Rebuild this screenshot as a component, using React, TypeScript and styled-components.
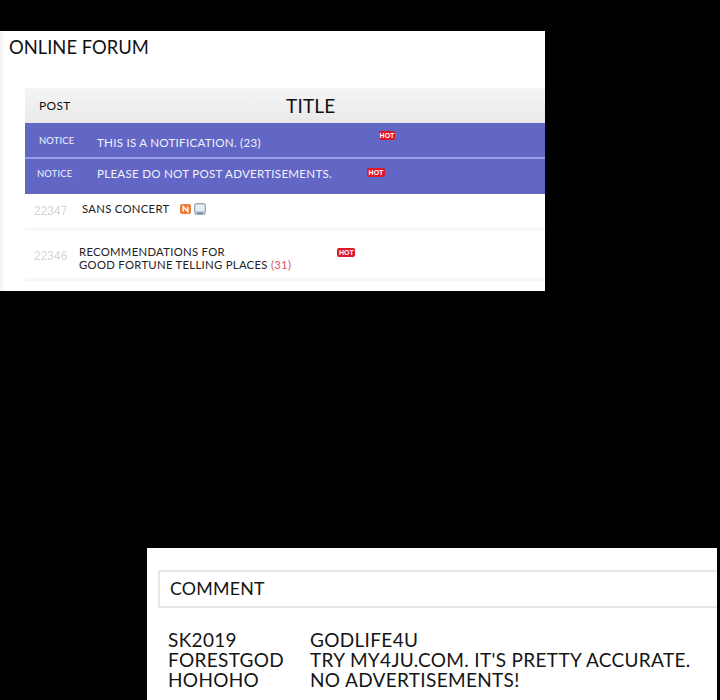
import { Fragment } from "react";
import styled, { createGlobalStyle } from "styled-components";

const GlobalStyle = createGlobalStyle`
  html, body {
    margin: 0;
    padding: 0;
    background: #000;
  }
`;

const Page = styled.div`
  width: 720px;
  height: 700px;
  overflow: hidden;
  background: #000;
  font-family: Lato, "Liberation Sans", sans-serif;
`;

const ForumPanel = styled.section`
  box-sizing: border-box;
  width: 545px;
  height: 260px;
  margin-top: 31px;
  background: #fff;
  border-left: 3px solid #f6f6f6;
  overflow: hidden;
`;

const ForumTitle = styled.h1`
  margin: 0;
  padding: 4px 0 0 6px;
  height: 52px;
  box-sizing: border-box;
  font-size: 18.4px;
  line-height: 24px;
  font-weight: 400;
  color: #111;
`;

const Table = styled.div`
  margin: 5px 0 0 22px;
`;

const HeaderRow = styled.div`
  display: flex;
  align-items: center;
  height: 35px;
  background: linear-gradient(#f5f5f5, #e9e9e9);
  color: #111;
`;

const HeaderPost = styled.span`
  width: 261px;
  padding-left: 14px;
  box-sizing: border-box;
  font-size: 12px;
  letter-spacing: 0.3px;
`;

const HeaderTitle = styled.span`
  font-size: 19px;
  letter-spacing: 0.2px;
`;

const NoticeRow = styled.div<{ $divider?: boolean }>`
  display: flex;
  align-items: center;
  box-sizing: border-box;
  height: ${(p) => (p.$divider ? 36 : 35)}px;
  background: #6267c6;
  color: #f2f2fb;
  border-bottom: ${(p) => (p.$divider ? "2px solid #9a9eea" : "none")};
`;

const NoticeLabel = styled.span<{ $indent: number; $width: number; $shift: number }>`
  width: ${(p) => p.$width}px;
  margin-top: ${(p) => p.$shift}px;
  padding-left: ${(p) => p.$indent}px;
  box-sizing: border-box;
  font-size: 9.4px;
  letter-spacing: 0.2px;
`;

const NoticeText = styled.span<{ $width: number; $shift: number }>`
  width: ${(p) => p.$width}px;
  margin-top: ${(p) => p.$shift}px;
  font-size: 11.6px;
  letter-spacing: 0.25px;
  white-space: nowrap;
`;

const HotBadge = styled.span<{ $big?: boolean; $lift: number; $gap?: number }>`
  display: inline-flex;
  align-items: center;
  justify-content: center;
  width: ${(p) => (p.$big ? 18 : 16)}px;
  height: 9px;
  margin-top: ${(p) => p.$lift}px;
  margin-left: ${(p) => p.$gap ?? 0}px;
  border-radius: 2px;
  background: #e0162b;
  color: #fff;
  font-family: "Liberation Sans", sans-serif;
  font-size: 7px;
  font-weight: 700;
`;

const PostRow = styled.div<{ $height: number }>`
  display: flex;
  align-items: center;
  box-sizing: border-box;
  height: ${(p) => p.$height}px;
  border-bottom: 3px solid #f7f7f7;
  color: #222;
`;

const PostNumber = styled.span<{ $width: number; $shift?: number }>`
  width: ${(p) => p.$width}px;
  margin-top: ${(p) => p.$shift ?? 0}px;
  padding-left: 9px;
  box-sizing: border-box;
  font-family: "Liberation Sans", sans-serif;
  font-size: 12px;
  color: #d4d4d4;
  filter: blur(0.6px);
`;

const PostText = styled.span<{ $top?: number; $bottom?: number }>`
  margin-top: ${(p) => p.$top ?? 0}px;
  margin-bottom: ${(p) => p.$bottom ?? 0}px;
  font-size: 11.3px;
  line-height: 13px;
  letter-spacing: 0.3px;
`;

const ReplyCount = styled.span`
  color: #d9545c;
`;

const IconSlot = styled.svg`
  display: block;
  flex: none;
`;

const PostBadges = styled.span`
  display: flex;
  align-items: center;
  gap: 3px;
  margin: 0 0 4px 11px;
`;

const CommentPanel = styled.section`
  box-sizing: border-box;
  width: 570px;
  height: 152px;
  margin: 257px 0 0 147px;
  padding-top: 22px;
  background: #fff;
  color: #151515;
`;

const CommentHeader = styled.div`
  box-sizing: border-box;
  height: 38px;
  margin-left: 11px;
  display: flex;
  align-items: center;
  padding: 0 0 3px 10px;
  border: 2px solid #e6e6e6;
  border-right: none;
  font-size: 17.8px;
  letter-spacing: 0.2px;
`;

const CommentList = styled.div`
  display: grid;
  grid-template-columns: 142px 1fr;
  margin: 22px 0 0 21px;
  font-size: 19px;
  line-height: 20px;
  letter-spacing: 0.33px;
`;

const comments = [
  ["SK2019", "GODLIFE4U"],
  ["FORESTGOD", "TRY MY4JU.COM. IT'S PRETTY ACCURATE."],
  ["HOHOHO", "NO ADVERTISEMENTS!"],
];

const App = () => {
  return (
    <Page>
      <GlobalStyle />
      <ForumPanel>
        <ForumTitle>ONLINE FORUM</ForumTitle>
        <Table>
          <HeaderRow>
            <HeaderPost>POST</HeaderPost>
            <HeaderTitle>TITLE</HeaderTitle>
          </HeaderRow>
          <NoticeRow $divider>
            <NoticeLabel $indent={14} $width={72} $shift={0}>NOTICE</NoticeLabel>
            <NoticeText $width={282} $shift={4}>
              THIS IS A NOTIFICATION. (23)
            </NoticeText>
            <HotBadge $lift={-9}>HOT</HotBadge>
          </NoticeRow>
          <NoticeRow>
            <NoticeLabel $indent={12} $width={72} $shift={-6}>NOTICE</NoticeLabel>
            <NoticeText $width={270} $shift={-7}>
              PLEASE DO NOT POST ADVERTISEMENTS.
            </NoticeText>
            <HotBadge $big $lift={-8}>HOT</HotBadge>
          </NoticeRow>
          <PostRow $height={37}>
            <PostNumber $width={57}>22347</PostNumber>
            <PostText $bottom={6}>SANS CONCERT</PostText>
            <PostBadges>
              <IconSlot width="11" height="10" viewBox="0 0 11 10">
                <rect width="11" height="10" rx="2" fill="#ee7b35" />
                <path d="M3.2 7.5v-5l4.6 5v-5" fill="none" stroke="#fff" strokeWidth="1.4" />
              </IconSlot>
              <IconSlot width="12" height="12" viewBox="0 0 12 12">
                <rect x=".5" y=".5" width="11" height="11" rx="2" fill="#c3d3e2" stroke="#9aa8b6" />
                <rect x="2" y="2" width="8" height="6" fill="#e8f0f7" />
                <path d="M2.5 10h7" stroke="#66778a" strokeWidth="1.2" />
              </IconSlot>
            </PostBadges>
          </PostRow>
          <PostRow $height={50}>
            <PostNumber $width={54} $shift={3}>22346</PostNumber>
            <PostText $top={7}>
              RECOMMENDATIONS FOR
              <br />
              GOOD FORTUNE TELLING PLACES <ReplyCount>(31)</ReplyCount>
            </PostText>
            <HotBadge $big $lift={-4} $gap={46}>HOT</HotBadge>
          </PostRow>
        </Table>
      </ForumPanel>
      <CommentPanel>
        <CommentHeader>COMMENT</CommentHeader>
        <CommentList>
          {comments.map(([user, text]) => (
            <Fragment key={user}>
              <span>{user}</span>
              <span>{text}</span>
            </Fragment>
          ))}
        </CommentList>
      </CommentPanel>
    </Page>
  );
};

export default App;
